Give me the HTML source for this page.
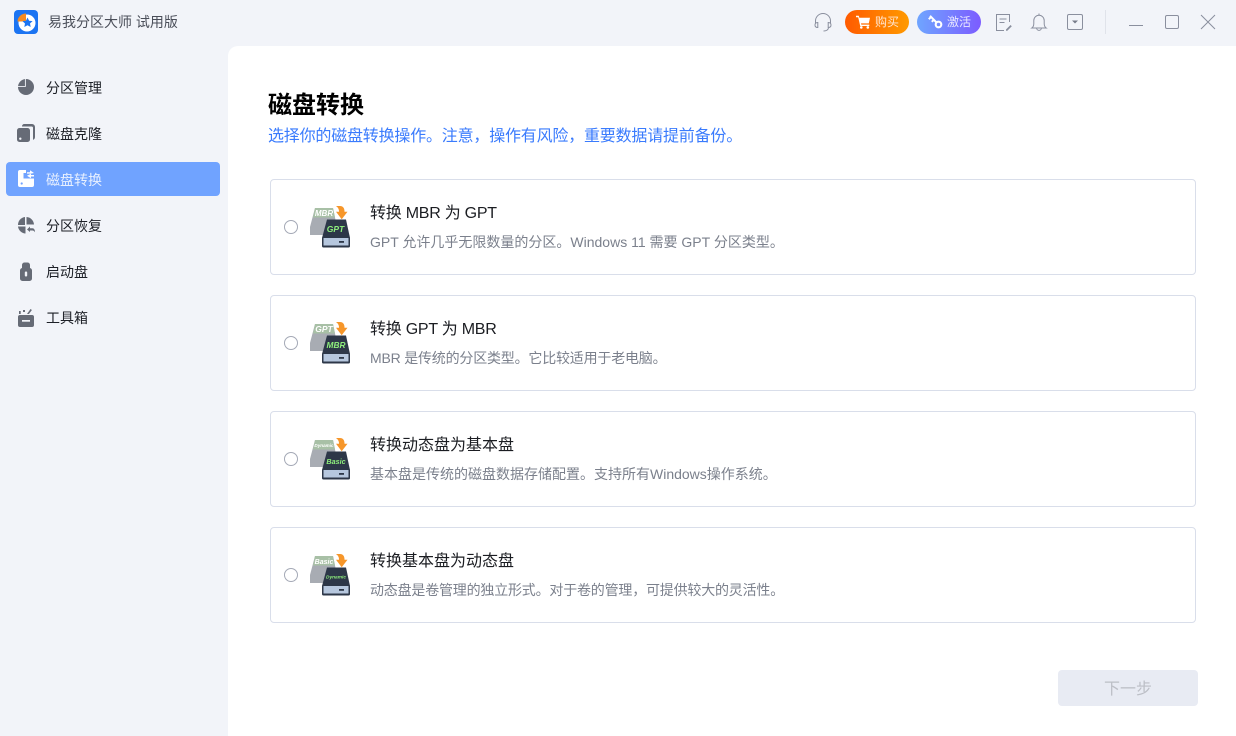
<!DOCTYPE html>
<html lang="zh-CN"><head><meta charset="utf-8"><title>易我分区大师</title>
<style>
*{box-sizing:border-box;margin:0;padding:0}
html,body{width:1236px;height:736px;overflow:hidden}
body{position:relative;background:#f2f4f9;font-family:"Liberation Sans","Noto Sans CJK SC",sans-serif;color:#1f2126}
.a{position:absolute;white-space:nowrap}
svg{position:absolute;overflow:visible}
svg text{font-family:"Liberation Sans",sans-serif;font-weight:700;font-style:italic;text-anchor:middle}
.main{position:absolute;left:228px;top:46px;width:1008px;height:690px;background:#fff;border-top-left-radius:10px}
.nav{position:absolute;left:46px;font-size:14px;line-height:20px;color:#1d2027}
.active{position:absolute;left:6px;top:162px;width:214px;height:34px;background:#70a3ff;border-radius:4px}
.card{position:absolute;left:270px;width:926px;height:96px;border:1px solid #d9deea;border-radius:4px;background:#fff}
.radio{position:absolute;left:284px;width:14px;height:14px;border:1px solid #a4a9b6;border-radius:50%;background:#fff}
.t{position:absolute;left:370px;font-size:16px;line-height:22px;color:#1b1d22}
.d{position:absolute;left:370px;font-size:14px;line-height:20px;color:#7b808c}
.pill{position:absolute;top:10px;height:24px;border-radius:12px;color:#fff;font-size:12px;line-height:24px}
.next{position:absolute;left:1058px;top:670px;width:140px;height:36px;background:#e8ebf3;border-radius:4px;text-align:center;font-size:16px;line-height:40px;color:#bcbfc6}
</style></head><body>

<svg style="left:14px;top:10px" width="24" height="24" viewBox="0 0 24 24">
<rect width="24" height="24" rx="4" fill="#1c74f2"/>
<circle cx="13" cy="13" r="8.500" fill="#fff"/>
<path d="M3.500 11.500A8.500 8.500 0 0 1 12 3.500V11.500Z" fill="#f58a1f"/>
<path d="M13.500 7.500l1.600 3.200 3.500.4-2.600 2.400.7 3.500-3.200-1.700-3.200 1.700.7-3.500-2.600-2.400 3.500-.4Z" fill="#1c74f2"/>
</svg>
<div class="a" style="left:48px;top:12px;font-size:14px;line-height:20px;color:#4a4e59">易我分区大师 试用版</div>

<!-- top right -->
<svg style="left:814px;top:13px" width="18" height="19" viewBox="0 0 18 19" fill="none" stroke="#8a8f9e" stroke-width="1">
<path d="M1.500 10V8a7.500 7.500 0 0 1 15 0V10"/><path d="M3.800 9.500C2 9.500 1 10.500 1 12s1 2.500 2.800 2.500Z"/><path d="M14.200 9.500c1.800 0 2.800 1 2.800 2.500s-1 2.500-2.800 2.500Z"/><path d="M14.500 15c-.5 2-2.500 3-5 3"/>
</svg>
<div class="pill" style="left:845px;width:64px;background:linear-gradient(90deg,#ff5a00,#ff9a00)">
<svg style="left:11px;top:5px" width="15" height="14" viewBox="0 0 15 14" fill="#fff"><path d="M0 .8h2.800l.5 2h10.700l-1.200 5.600H5l.3 1.200h8v1.400H4.200L2.200 2.200H0Z"/><circle cx="5.300" cy="12.400" r="1.300"/><circle cx="11.800" cy="12.400" r="1.300"/></svg>
<span class="a" style="left:30px;top:0;color:#ffe6d2">购买</span></div>
<div class="pill" style="left:917px;width:64px;background:linear-gradient(90deg,#6fa5ff,#7c5cff)">
<svg style="left:11px;top:5px" width="15" height="14" viewBox="0 0 15 14" fill="none" stroke="#fff"><circle cx="10.500" cy="9.500" r="2.800" stroke-width="2.100"/><path d="M8.500 7.500L2 .8M3 2L.8 4.200M5.800 4.800L3.800 6.800" stroke-width="2"/></svg>
<span class="a" style="left:30px;top:0;color:#e8e6ff">激活</span></div>
<svg style="left:996px;top:14px" width="16" height="17" viewBox="0 0 16 17" fill="none" stroke="#8a8f9e" stroke-width="1">
<path d="M13.500 8V.5H.5V16.500H8"/><path d="M3.500 5h7M3.500 8.500h5"/><path d="M10 15.500l4.500-4.500 1.300 1.300-4.500 4.500H10Z" fill="#8a8f9e" stroke="none"/>
</svg>
<svg style="left:1031px;top:13px" width="16" height="19" viewBox="0 0 16 19" fill="none" stroke="#8a8f9e" stroke-width="1">
<path d="M.8 15c1.700-1.200 2-2.600 2-4.500V7.500A5.200 5.200 0 0 1 8 2.300a5.200 5.200 0 0 1 5.200 5.200v3c0 1.900.3 3.300 2 4.500Z"/><path d="M8 .5v1.800M5.600 15a2.400 2.400 0 0 0 4.800 0"/>
</svg>
<svg style="left:1067px;top:14px" width="16" height="16" viewBox="0 0 16 16" fill="none">
<rect x=".5" y=".5" width="15" height="15" rx="1.500" stroke="#8a8f9e" stroke-width="1"/><path d="M5 6.500h6L8 9.500Z" fill="#777c8a"/>
</svg>
<div class="a" style="left:1105px;top:10px;width:1px;height:24px;background:#e0e3ea"></div>
<div class="a" style="left:1129px;top:25px;width:14px;height:1px;background:#8a8f9e"></div>
<div class="a" style="left:1165px;top:15px;width:14px;height:14px;border:1px solid #8a8f9e;border-radius:2px"></div>
<svg style="left:1201px;top:15px" width="14" height="14" viewBox="0 0 14 14" stroke="#8a8f9e" stroke-width="1"><path d="M0 0L14 14M14 0L0 14"/></svg>

<!-- sidebar -->
<div class="active"></div>
<svg style="left:18px;top:79px" width="16" height="16" viewBox="0 0 16 16" fill="#666b76"><circle cx="8" cy="8" r="8"/><path d="M7.400 0V7.400H0" fill="none" stroke="#f2f4f9" stroke-width=".9"/></svg>
<svg style="left:17px;top:124px" width="18" height="18" viewBox="0 0 18 18" fill="#666b76"><rect x="0" y="4" width="13" height="14" rx="2.500"/><path d="M5 2.500C5 1 6 0 7.500 0H15a3 3 0 0 1 3 3v10c0 1.500-.8 2.500-2 2.800V3.800C16 3 15.500 2.500 14.700 2.500Z"/><circle cx="3.300" cy="14.700" r="1.200" fill="#f2f4f9"/></svg>
<svg style="left:18px;top:170px" width="16" height="17" viewBox="0 0 16 17" fill="#fff"><path d="M2 0H8V3H5.500V8.500H16V15a2 2 0 0 1-2 2H2a2 2 0 0 1-2-2V2A2 2 0 0 1 2 0Z"/><path d="M9 2.300h3V.2L16 3 12 3.800V3.600H9ZM16 5v1.500h-3V8.200L9 5.700 13 3.800V5Z"/><circle cx="3.700" cy="13.500" r="1.100" fill="#70a3ff"/></svg>
<svg style="left:18px;top:217px" width="17" height="17" viewBox="0 0 17 17" fill="#666b76"><path d="M7 0V8H0A8 8 0 0 1 7 0Z"/><path d="M8.500 0A8 8 0 0 1 16 7.500H8.500Z"/><path d="M0 9.500H7.500V16.500A8 8 0 0 1 0 9.500Z"/><path d="M9 12.500l3-3v1.800h2.500c1.500 0 2.500 1.500 2.500 4-.7-1.200-1.500-1.800-2.500-1.800H12V15Z"/></svg>
<svg style="left:20px;top:262px" width="12" height="19" viewBox="0 0 12 19" fill="#666b76"><path d="M2 3a2.500 2.500 0 0 1 2.500-2.500h3A2.500 2.500 0 0 1 10 3V6.500H2Z"/><rect x="0" y="6" width="12" height="13" rx="2.500"/><rect x="4.800" y="9.500" width="2.400" height="5" rx="1" fill="#f2f4f9"/></svg>
<svg style="left:18px;top:309px" width="17" height="18" viewBox="0 0 17 18" fill="#666b76"><rect x="0" y="6" width="16" height="12" rx="2"/><rect x="4" y="11" width="8" height="1.700" fill="#f2f4f9"/><rect x="1" y="2" width="1.700" height="3"/><rect x="5" y="1" width="2" height="2"/><path d="M9 5l3.500-5 1.400 1-3 4Z"/></svg>

<div class="nav" style="top:78px">分区管理</div>
<div class="nav" style="top:124px">磁盘克隆</div>
<div class="nav" style="top:170px;color:#e8f0ff">磁盘转换</div>
<div class="nav" style="top:216px">分区恢复</div>
<div class="nav" style="top:262px">启动盘</div>
<div class="nav" style="top:308px">工具箱</div>

<div class="main"></div>
<div class="a" style="left:268px;top:89px;font-size:24px;line-height:34px;font-weight:700;color:#000">磁盘转换</div>
<div class="a" style="left:268px;top:125px;font-size:16px;line-height:24px;color:#3a7bfd;letter-spacing:-.2px">选择你的磁盘转换操作。注意，操作有风险，重要数据请提前备份。</div>

<div class="card" style="top:179px"></div>
<div class="card" style="top:295px"></div>
<div class="card" style="top:411px"></div>
<div class="card" style="top:527px"></div>
<div class="radio" style="top:220px"></div>
<div class="radio" style="top:336px"></div>
<div class="radio" style="top:452px"></div>
<div class="radio" style="top:568px"></div>

<svg style="left:308px;top:205px" width="44" height="44" viewBox="0 0 44 44"><path d="M7 3H25L29 22V30H2V22Z" fill="#a8acb3"/><path d="M7 3H25L27 12.500H5Z" fill="#a8c0a6"/><path d="M19 14.500H38L42 33H14Z" fill="#2d3748"/><rect x="14" y="32" width="28" height="10.500" rx="1.500" fill="#2d3748"/><rect x="15.500" y="33" width="25" height="7.500" fill="#b6c7de"/><rect x="31" y="36" width="5" height="1.800" fill="#2d3748"/><path d="M28 1H32C35 1 36.500 3 36.500 6.700H39.500L33.700 14.300 28 6.700H31C31 4 30 2.500 28 1Z" fill="#f6962a"/><text x="27.500" y="27" font-size="8.500" fill="#8ff07d">GPT</text><text x="16" y="11" font-size="8" fill="#fff">MBR</text></svg>

<svg style="left:308px;top:321px" width="44" height="44" viewBox="0 0 44 44"><path d="M7 3H25L29 22V30H2V22Z" fill="#a8acb3"/><path d="M7 3H25L27 12.500H5Z" fill="#a8c0a6"/><path d="M19 14.500H38L42 33H14Z" fill="#2d3748"/><rect x="14" y="32" width="28" height="10.500" rx="1.500" fill="#2d3748"/><rect x="15.500" y="33" width="25" height="7.500" fill="#b6c7de"/><rect x="31" y="36" width="5" height="1.800" fill="#2d3748"/><path d="M28 1H32C35 1 36.500 3 36.500 6.700H39.500L33.700 14.300 28 6.700H31C31 4 30 2.500 28 1Z" fill="#f6962a"/><text x="28" y="27" font-size="8.300" fill="#8ff07d">MBR</text><text x="16" y="11" font-size="8.500" fill="#fff">GPT</text></svg>

<svg style="left:308px;top:437px" width="44" height="44" viewBox="0 0 44 44"><path d="M7 3H25L29 22V30H2V22Z" fill="#a8acb3"/><path d="M7 3H25L27 12.500H5Z" fill="#a8c0a6"/><path d="M19 14.500H38L42 33H14Z" fill="#2d3748"/><rect x="14" y="32" width="28" height="10.500" rx="1.500" fill="#2d3748"/><rect x="15.500" y="33" width="25" height="7.500" fill="#b6c7de"/><rect x="31" y="36" width="5" height="1.800" fill="#2d3748"/><path d="M28 1H32C35 1 36.500 3 36.500 6.700H39.500L33.700 14.300 28 6.700H31C31 4 30 2.500 28 1Z" fill="#f6962a"/><text x="28" y="27" font-size="7.200" fill="#8ff07d">Basic</text><text x="16" y="10" font-size="4.600" fill="#fff">Dynamic</text></svg>

<svg style="left:308px;top:553px" width="44" height="44" viewBox="0 0 44 44"><path d="M7 3H25L29 22V30H2V22Z" fill="#a8acb3"/><path d="M7 3H25L27 12.500H5Z" fill="#a8c0a6"/><path d="M19 14.500H38L42 33H14Z" fill="#2d3748"/><rect x="14" y="32" width="28" height="10.500" rx="1.500" fill="#2d3748"/><rect x="15.500" y="33" width="25" height="7.500" fill="#b6c7de"/><rect x="31" y="36" width="5" height="1.800" fill="#2d3748"/><path d="M28 1H32C35 1 36.500 3 36.500 6.700H39.500L33.700 14.300 28 6.700H31C31 4 30 2.500 28 1Z" fill="#f6962a"/><text x="28" y="25.500" font-size="4.800" fill="#8ff07d">Dynamic</text><text x="16" y="11" font-size="7" fill="#fff">Basic</text></svg>

<div class="t" style="top:203px;letter-spacing:-.25px">转换 MBR 为 GPT</div>
<div class="d" style="top:232px">GPT 允许几乎无限数量的分区。Windows 11 需要 GPT 分区类型。</div>
<div class="t" style="top:319px;letter-spacing:-.25px">转换 GPT 为 MBR</div>
<div class="d" style="top:348px;letter-spacing:-.2px">MBR 是传统的分区类型。它比较适用于老电脑。</div>
<div class="t" style="top:435px">转换动态盘为基本盘</div>
<div class="d" style="top:464px">基本盘是传统的磁盘数据存储配置。支持所有Windows操作系统。</div>
<div class="t" style="top:551px">转换基本盘为动态盘</div>
<div class="d" style="top:580px;letter-spacing:-.2px">动态盘是卷管理的独立形式。对于卷的管理，可提供较大的灵活性。</div>

<div class="next">下一步</div>
</body></html>
